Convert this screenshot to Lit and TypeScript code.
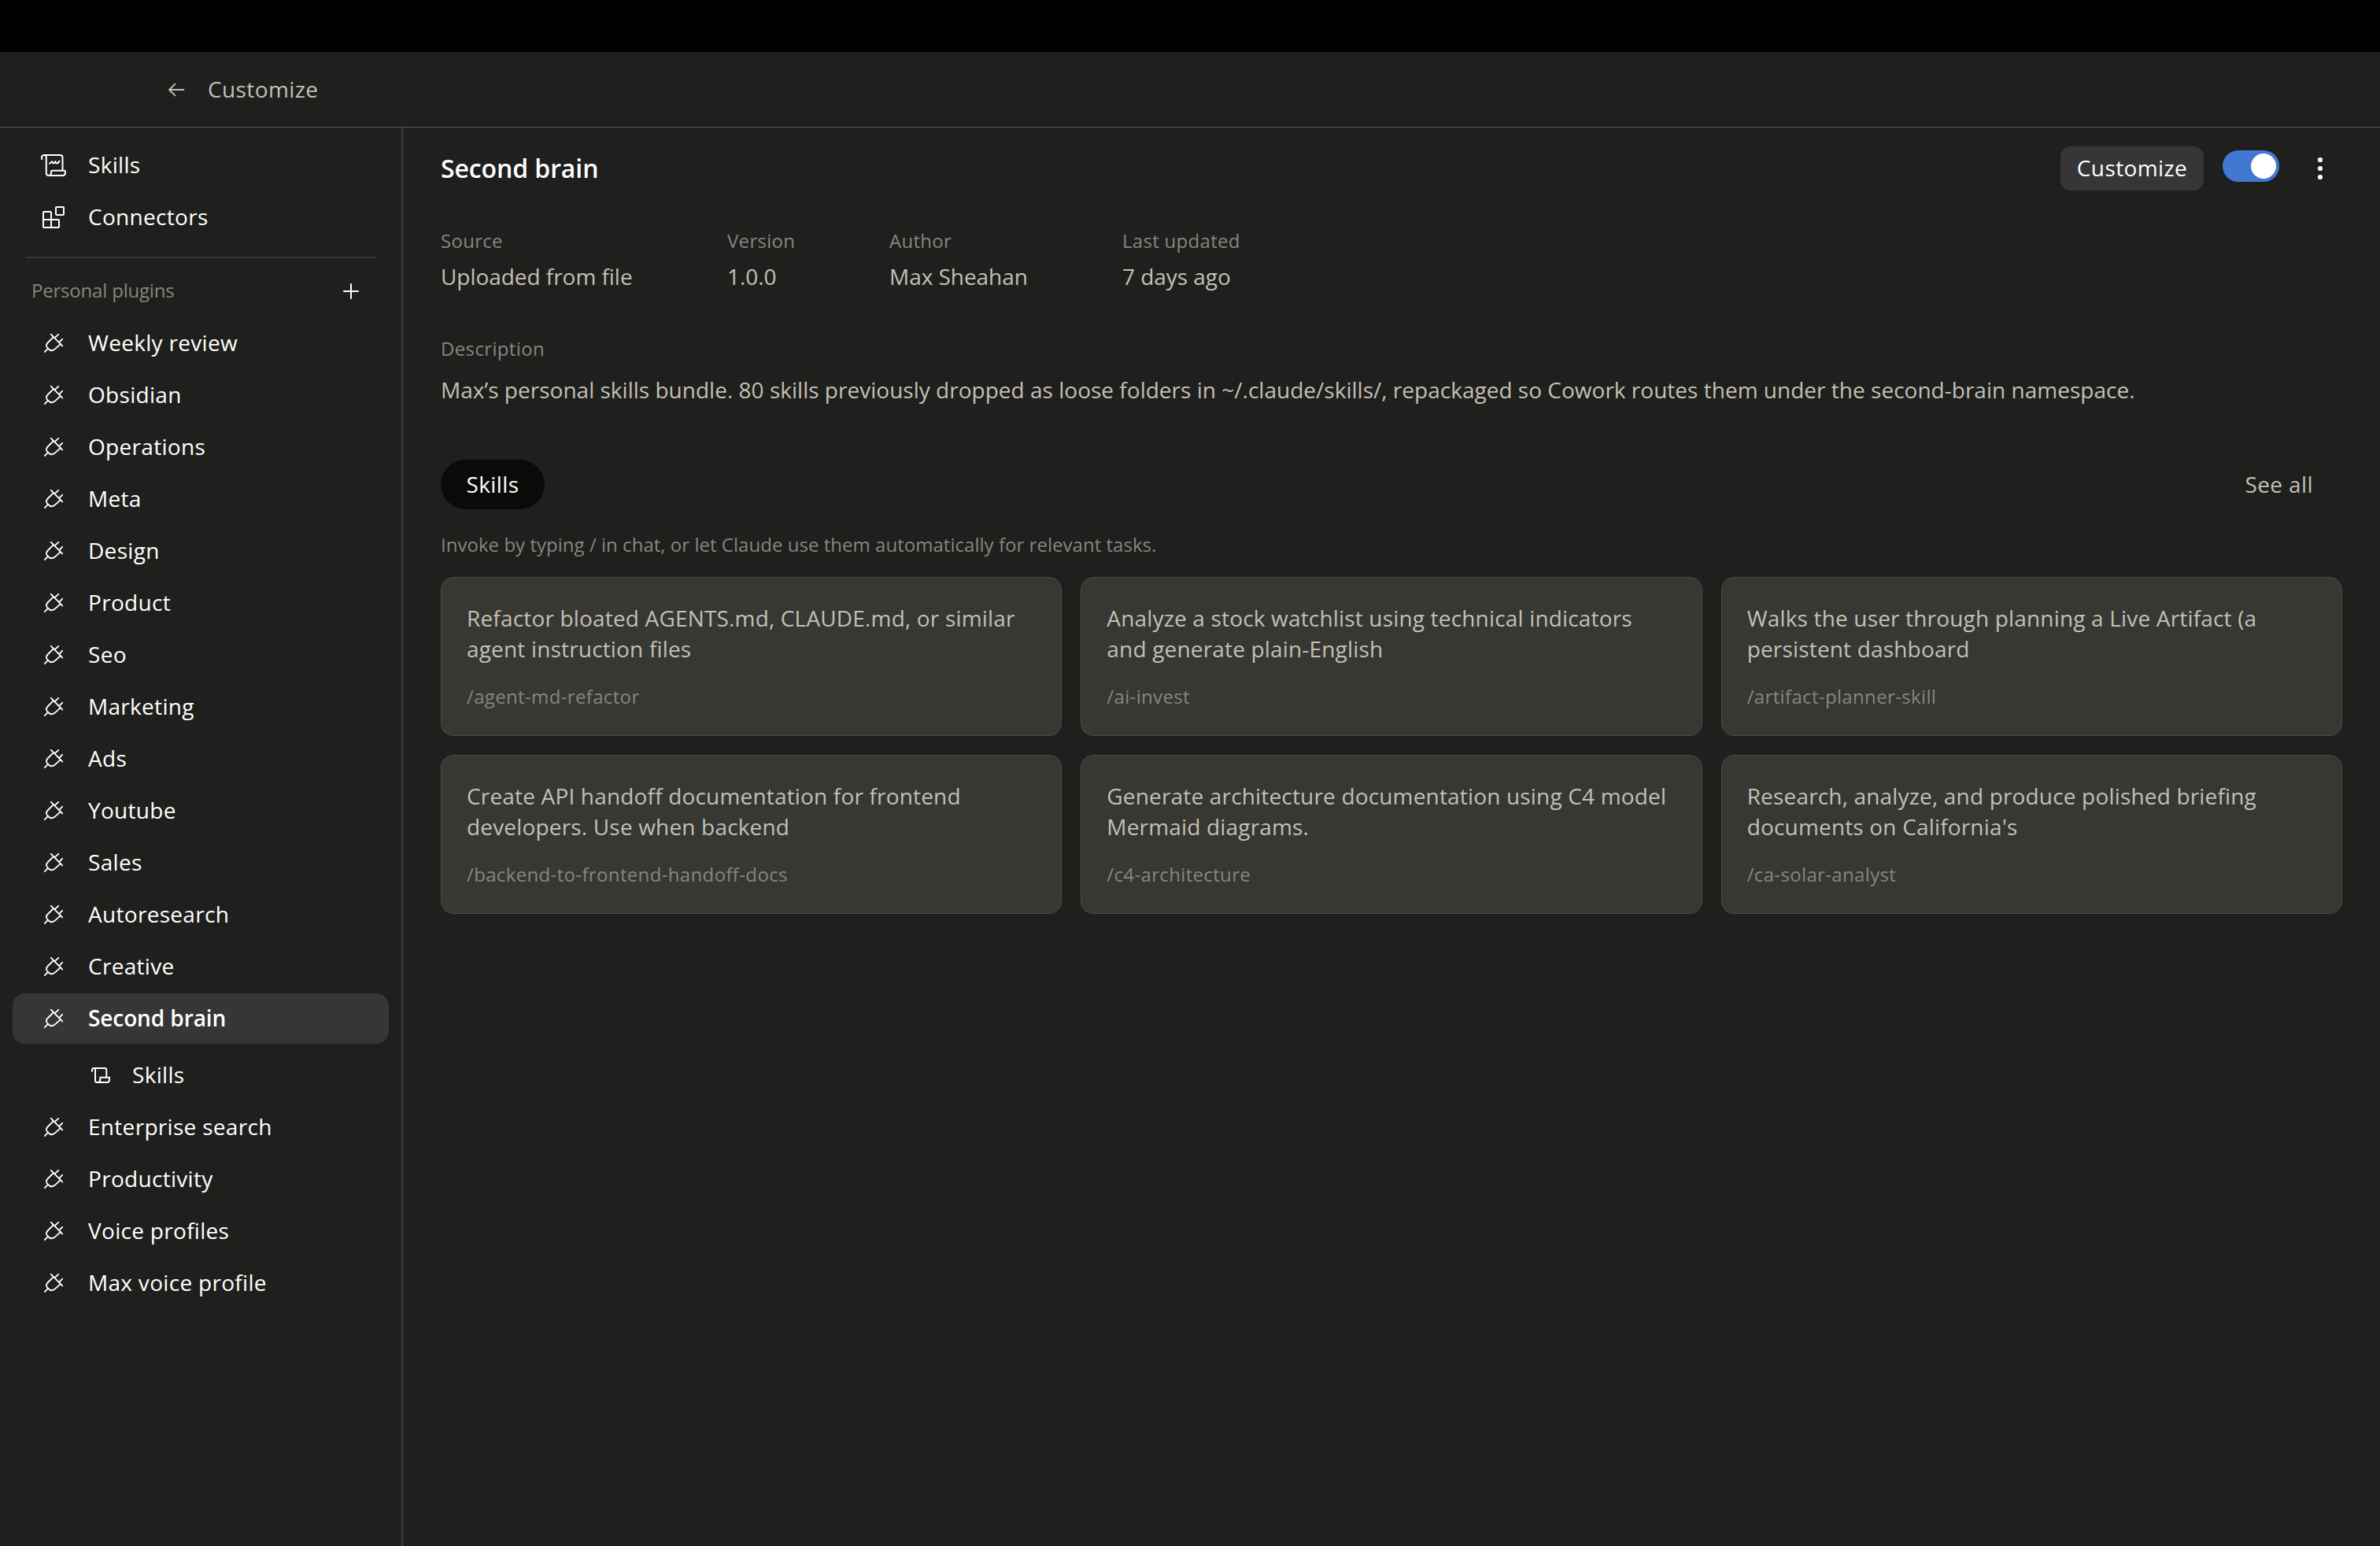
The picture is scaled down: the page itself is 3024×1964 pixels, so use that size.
import { LitElement, html, css, svg } from "lit";
import { customElement, property } from "lit/decorators.js";
import { classMap } from "lit/directives/class-map.js";

type IconName = "scroll" | "scrollSmall" | "blocks" | "plug" | "plus" | "back" | "dots";

const ICONS: Record<IconName, { w: number; h: number; stroke: number; body: unknown }> = {
  scroll: {
    w: 36,
    h: 36,
    stroke: 2,
    body: svg`
      <path d="M3.3 10.2C2.3 7.2 3.4 5 6.2 5H26.2Q29.5 5 29.5 8.3V24.6" />
      <path d="M6.2 5Q8.8 5 8.8 8V28Q8.8 31 12 31H29.6Q33 31 33 27.6V26Q33 24.7 31.6 24.7H16.4Q15 24.7 15 26V28Q15 31 12 31" />
      <path d="M13 15.6C14.2 15 15.2 14 16 13C16.2 14.4 16.6 15.2 17.4 15.4C18.8 15.2 19.6 14.2 20.3 13C20.5 14.4 20.9 15.4 21.8 15.5C23.4 15.5 24.6 14.4 25.4 12.8" />`,
  },
  scrollSmall: {
    w: 24,
    h: 24,
    stroke: 2,
    body: svg`
      <path d="M1 7V5.4Q1 3 3.5 3H17Q19.3 3 19.3 5.4V14.8" />
      <path d="M3.5 3Q5 3 5 5.4V18.4Q5 21 7.6 21H20Q23 21 23 18V14.8H11.3V18Q11.3 21 8.2 21" />`,
  },
  blocks: {
    w: 36,
    h: 36,
    stroke: 2,
    body: svg`
      <rect x="21" y="5" width="10" height="10" rx="1" />
      <path d="M6 11H14Q15 11 15 12V21H24Q25 21 25 22V30Q25 31 24 31H6Q5 31 5 30V12Q5 11 6 11ZM5 21H15V31" />`,
  },
  plug: {
    w: 24,
    h: 24,
    stroke: 1.8,
    body: svg`
      <path d="M8.7 .7L23.4 15.6M18.3 .8L13.6 5.2M23.3 6.6L19.2 10.8" />
      <path d="M12 4.1L5 11C2.2 13.8 2.3 16.2 5 18.8C7.8 21.7 11.4 21.8 14.2 19.2L20.9 13.1" />
      <path d="M5.2 18.7L.7 23.2" />`,
  },
  plus: { w: 24, h: 24, stroke: 2, body: svg`<path d="M12 3V21M3 12H21" />` },
  back: { w: 24, h: 24, stroke: 1.8, body: svg`<path d="M21.4 12H3M10.6 4.6L3 12L10.6 19.4" />` },
  dots: {
    w: 32,
    h: 32,
    stroke: 0,
    body: svg`<g fill="currentColor"><circle cx="16" cy="5" r="3.1" /><circle cx="16" cy="16" r="3.1" /><circle cx="16" cy="27" r="3.1" /></g>`,
  },
};

const PLUGINS = [
  "Weekly review",
  "Obsidian",
  "Operations",
  "Meta",
  "Design",
  "Product",
  "Seo",
  "Marketing",
  "Ads",
  "Youtube",
  "Sales",
  "Autoresearch",
  "Creative",
  "Second brain",
  "Enterprise search",
  "Productivity",
  "Voice profiles",
  "Max voice profile",
];

const META = [
  { label: "Source", value: "Uploaded from file" },
  { label: "Version", value: "1.0.0" },
  { label: "Author", value: "Max Sheahan" },
  { label: "Last updated", value: "7 days ago" },
];

const SKILLS = [
  { text: "Refactor bloated AGENTS.md, CLAUDE.md, or similar\nagent instruction files", command: "/agent-md-refactor" },
  { text: "Analyze a stock watchlist using technical indicators\nand generate plain-English", command: "/ai-invest" },
  { text: "Walks the user through planning a Live Artifact (a\npersistent dashboard", command: "/artifact-planner-skill" },
  { text: "Create API handoff documentation for frontend\ndevelopers. Use when backend", command: "/backend-to-frontend-handoff-docs" },
  { text: "Generate architecture documentation using C4 model\nMermaid diagrams.", command: "/c4-architecture" },
  { text: "Research, analyze, and produce polished briefing\ndocuments on California's", command: "/ca-solar-analyst" },
];

@customElement("ui-icon")
export class UiIcon extends LitElement {
  @property() name: IconName = "plug";

  static styles = css`
    :host { display: flex; flex: none; }
    .icon { display: block; }
  `;

  render() {
    const i = ICONS[this.name];
    return html`<svg
      class="icon"
      width=${i.w}
      height=${i.h}
      viewBox="0 0 ${i.w} ${i.h}"
      fill="none"
      stroke="currentColor"
      stroke-width=${i.stroke}
      stroke-linecap="round"
      stroke-linejoin="round"
    >${i.body}</svg>`;
  }
}

@customElement("plugin-sidebar")
export class PluginSidebar extends LitElement {
  @property() selected = "";

  static styles = css`
    :host {
      display: block;
      flex: none;
      box-sizing: border-box;
      width: 512px;
      padding: 16px 16px 0;
      border-right: 2px solid #3e3e3b;
      color: #fff;
    }
    .list { display: flex; flex-direction: column; gap: 2px; }
    .row {
      display: flex;
      align-items: center;
      gap: 26px;
      height: 64px;
      box-sizing: border-box;
      padding-left: 34px;
      border-radius: 16px;
      font-size: 28px;
      line-height: 40px;
      letter-spacing: 0.3px;
    }
    .slot { display: flex; justify-content: center; width: 36px; flex: none; }
    .label { padding-bottom: 2px; white-space: nowrap; }
    .selected { background: #363636; font-weight: 600; letter-spacing: -0.1px; }
    .child { margin-top: 6px; padding-left: 100px; gap: 28px; }
    .child .slot { width: 24px; }
    .divider { height: 2px; margin: 18px 16px 0; background: #363635; }
    .head {
      display: flex;
      align-items: center;
      justify-content: space-between;
      height: 76px;
      box-sizing: border-box;
      padding: 8px 36px 0 24px;
      font-size: 24px;
      line-height: 32px;
    }
    .headlabel { color: #87867f; padding-bottom: 3px; letter-spacing: -0.2px; }
  `;

  private row(label: string, icon: IconName, extra: Record<string, boolean> = {}) {
    return html`<div class=${classMap({ row: true, ...extra })}>
      <span class="slot"><ui-icon name=${icon}></ui-icon></span>
      <span class="label">${label}</span>
    </div>`;
  }

  render() {
    return html`
      <nav class="list">${this.row("Skills", "scroll")}${this.row("Connectors", "blocks")}</nav>
      <div class="divider"></div>
      <div class="head">
        <span class="headlabel">Personal plugins</span>
        <ui-icon name="plus"></ui-icon>
      </div>
      <nav class="list">
        ${PLUGINS.map((p) => {
          const on = p === this.selected;
          return html`${this.row(p, "plug", { selected: on })}
          ${on ? this.row("Skills", "scrollSmall", { child: true }) : ""}`;
        })}
      </nav>
    `;
  }
}

@customElement("plugin-detail")
export class PluginDetail extends LitElement {
  static styles = css`
    :host {
      display: flex;
      flex-direction: column;
      flex: 1;
      min-width: 0;
      padding: 24px 48px 0;
      color: #c2c0b6;
      font-size: 28px;
      line-height: 40px;
    }
    .top { display: flex; align-items: center; height: 56px; gap: 24px; color: #fff; }
    .title {
      flex: 1;
      margin: 0;
      font-size: 32px;
      line-height: 44px;
      font-weight: 600;
      letter-spacing: -0.1px;
    }
    .button {
      display: flex;
      align-items: center;
      justify-content: center;
      width: 182px;
      height: 56px;
      box-sizing: border-box;
      padding-bottom: 2px;
      border-radius: 13px;
      background: #363636;
      font-weight: 500;
      letter-spacing: 0.4px;
    }
    .toggle {
      display: flex;
      justify-content: flex-end;
      width: 72px;
      height: 40px;
      box-sizing: border-box;
      padding: 4px;
      margin-bottom: 6px;
      border-radius: 20px;
      background: #4277d2;
    }
    .knob { width: 32px; height: 32px; border-radius: 50%; background: #fff; }
    .more { display: flex; justify-content: center; width: 56px; }
    .muted { color: #87867f; font-size: 24px; line-height: 32px; }
    .meta {
      display: grid;
      grid-template-columns: 244px 86px 176px 150px;
      column-gap: 120px;
      margin-top: 48px;
    }
    .cell { display: flex; flex-direction: column; gap: 9px; white-space: nowrap; }
    .cell .muted { letter-spacing: 0.3px; }
    .value { letter-spacing: -0.05px; }
    .desclabel { margin-top: 56px; letter-spacing: 0.35px; }
    .desc { margin-top: 16px; white-space: nowrap; letter-spacing: 0.012px; }
    .tabs {
      display: flex;
      align-items: center;
      justify-content: space-between;
      margin-top: 69px;
      padding-right: 37px;
      height: 63px;
      letter-spacing: 0.4px;
    }
    .seeall { padding-bottom: 1px; }
    .pill {
      display: flex;
      align-items: center;
      justify-content: center;
      width: 132px;
      height: 63px;
      box-sizing: border-box;
      padding-bottom: 1px;
      border-radius: 32px;
      background: #0a0a09;
      color: #fff;
    }
    .hint { margin-top: 29px; letter-spacing: 0.03px; }
    .grid {
      display: grid;
      grid-template-columns: repeat(3, 1fr);
      grid-auto-rows: 202px;
      gap: 24px;
      margin-top: 25px;
    }
    .card {
      display: flex;
      flex-direction: column;
      gap: 25px;
      box-sizing: border-box;
      min-width: 0;
      padding: 32px 24px 0 32px;
      border: 1px solid #4a4a46;
      border-radius: 16px;
      background: #373733;
    }
    .text { white-space: pre; line-height: 39.2px; letter-spacing: 0.17px; }
    .command { letter-spacing: 0.35px; }
  `;

  render() {
    return html`
      <div class="top">
        <h1 class="title">Second brain</h1>
        <div class="button">Customize</div>
        <div class="toggle"><span class="knob"></span></div>
        <div class="more"><ui-icon name="dots"></ui-icon></div>
      </div>
      <div class="meta">
        ${META.map(
          (m) => html`<div class="cell"><span class="muted">${m.label}</span><span class="value">${m.value}</span></div>`,
        )}
      </div>
      <div class="muted desclabel">Description</div>
      <div class="desc">Max’s personal skills bundle. 80 skills previously dropped as loose folders in ~/.claude/skills/, repackaged so Cowork routes them under the second-brain namespace.</div>
      <div class="tabs"><div class="pill">Skills</div><span class="seeall">See all</span></div>
      <div class="muted hint">Invoke by typing / in chat, or let Claude use them automatically for relevant tasks.</div>
      <div class="grid">
        ${SKILLS.map(
          (s) => html`<div class="card"><div class="text">${s.text}</div><div class="muted command">${s.command}</div></div>`,
        )}
      </div>
    `;
  }
}

@customElement("app-root")
export class AppRoot extends LitElement {
  static styles = css`
    :host {
      display: flex;
      flex-direction: column;
      box-sizing: border-box;
      width: 100%;
      height: 100vh;
      overflow: hidden;
      border-top: 66px solid #000;
      background: #1f1f1d;
      font-family: "Open Sans", "Noto Sans", sans-serif;
      font-weight: 430;
    }
    .header {
      display: flex;
      align-items: center;
      flex: none;
      gap: 28px;
      height: 96px;
      box-sizing: border-box;
      padding-left: 212px;
      border-bottom: 1px solid #565653;
      color: #c2c0b6;
      font-size: 28px;
      line-height: 40px;
      letter-spacing: 0.4px;
    }
    .crumb { padding-bottom: 2px; }
    .body { display: flex; flex: 1; min-height: 0; }
  `;

  render() {
    return html`
      <header class="header"><ui-icon name="back"></ui-icon><span class="crumb">Customize</span></header>
      <div class="body">
        <plugin-sidebar selected="Second brain"></plugin-sidebar>
        <plugin-detail></plugin-detail>
      </div>
    `;
  }
}
